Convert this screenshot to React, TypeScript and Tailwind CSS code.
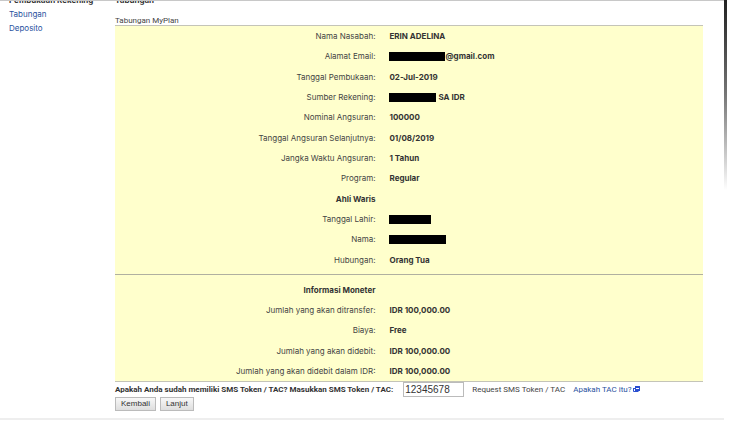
import { useState } from "react";

type Row = {
  label: string;
  value?: string;
  redacted?: string;
  heading?: boolean;
};

const ACCOUNT_ROWS: Row[] = [
  { label: "Nama Nasabah:", value: "ERIN ADELINA" },
  { label: "Alamat Email:", value: "@gmail.com", redacted: "w-[56px]" },
  { label: "Tanggal Pembukaan:", value: "02-Jul-2019" },
  { label: "Sumber Rekening:", value: "SA IDR", redacted: "w-[47px] mr-[2px]" },
  { label: "Nominal Angsuran:", value: "100000" },
  { label: "Tanggal Angsuran Selanjutnya:", value: "01/08/2019" },
  { label: "Jangka Waktu Angsuran:", value: "1 Tahun" },
  { label: "Program:", value: "Regular" },
  { label: "Ahli Waris", heading: true },
  { label: "Tanggal Lahir:", redacted: "w-[42px]" },
  { label: "Nama:", redacted: "w-[57px]" },
  { label: "Hubungan:", value: "Orang Tua" },
];

const MONEY_ROWS: Row[] = [
  { label: "Informasi Moneter", heading: true },
  { label: "Jumlah yang akan ditransfer:", value: "IDR 100,000.00" },
  { label: "Biaya:", value: "Free" },
  { label: "Jumlah yang akan didebit:", value: "IDR 100,000.00" },
  { label: "Jumlah yang akan didebit dalam IDR:", value: "IDR 100,000.00" },
];

const DetailTable = ({ rows, className }: { rows: Row[]; className: string }) => (
  <table className={`w-full table-fixed font-[Inter,Arial,sans-serif] ${className}`}>
    <tbody>
      {rows.map((row) => (
        <tr key={row.label}>
          <th
            scope="row"
            className={`w-[44.3%] p-0 text-right align-middle ${row.heading ? "font-bold text-[#333]" : "font-normal text-[#444]"}`}
          >
            {row.label}
          </th>
          <td className="py-0 pr-0 pl-[14px] align-middle font-bold text-[#333]">
            <div className="flex items-center">
              {row.redacted && <span className={`h-[9px] bg-black ${row.redacted}`} />}
              {row.value}
            </div>
          </td>
        </tr>
      ))}
    </tbody>
  </table>
);

const PopupIcon = () => (
  <svg className="ml-0.5 h-[7px] w-[7px]" viewBox="0 0 7 7" aria-hidden="true">
    <rect x="2" y="0" width="5" height="5" fill="#2a4fd0" />
    <rect x="3" y="2" width="3" height="1" fill="#fff" />
    <path d="M0.5 2.5V5.5H5.5" fill="none" stroke="#2a4fd0" />
    <path d="M0 2.5H2" stroke="#2a4fd0" />
  </svg>
);

const buttonClasses =
  "h-[14px] border border-[#bbb] bg-linear-to-b from-[#f8f8f8] to-[#dedede] px-[5px] font-['Liberation_Sans',Arial,sans-serif] leading-[12px] text-[#333]";

const App = () => {
  const [token, setToken] = useState("12345678");

  return (
    <div className="flex items-start bg-white pr-1 font-[Roboto,Arial,sans-serif] text-[8px] leading-[14px] text-[#444]">
      <div className="min-w-0 flex-1 overflow-hidden border-t border-b-2 border-t-[#c8c8c8] border-b-[#eee] pb-[7px]">
        <div className="-mt-2 flex">
          <nav className="w-[115px] shrink-0 pl-[9px] font-[Inter,Arial,sans-serif]">
            <h2 className="font-bold text-[#333]">Pembukaan Rekening</h2>
            <ul>
              <li>
                <a href="#tabungan" className="text-[#2a52a0]">Tabungan</a>
              </li>
              <li>
                <a href="#deposito" className="text-[#2a52a0]">Deposito</a>
              </li>
            </ul>
          </nav>

          <main className="min-w-0 flex-1 pr-[21px]">
            <h1 className="font-[Inter,Arial,sans-serif] font-bold text-[#333]">Tabungan</h1>
            <p className="mt-2.5 leading-[8px]">Tabungan MyPlan</p>

            <section className="border-y border-[#c4c4b8] bg-[#ffffcc]">
              <DetailTable rows={ACCOUNT_ROWS} className="h-[244px]" />
              <hr className="mt-1 mb-[5px] border-[#b0b0a0]" />
              <DetailTable rows={MONEY_ROWS} className="h-[101px]" />
            </section>

            <form onSubmit={(e) => e.preventDefault()}>
              <div className="flex items-center whitespace-nowrap">
                <label htmlFor="token" className="font-bold text-[#333]">
                  Apakah Anda sudah memiliki SMS Token / TAC? Masukkan SMS Token / TAC:
                </label>
                <input
                  id="token"
                  value={token}
                  onChange={(e) => setToken(e.target.value)}
                  className="ml-2.5 h-[15px] w-[61px] border border-[#bbb] bg-white px-px font-['Liberation_Sans',Arial,sans-serif] text-[10px] text-[#333]"
                />
                <span className="ml-2">Request SMS Token / TAC</span>
                <a href="#tac" className="ml-2 flex items-center text-[#2a52a0]">
                  Apakah TAC itu?
                  <PopupIcon />
                </a>
              </div>
              <div className="flex gap-1">
                <button type="button" className={buttonClasses}>Kembali</button>
                <button type="submit" className={buttonClasses}>Lanjut</button>
              </div>
            </form>
          </main>
        </div>
      </div>
      <div className="h-[190px] w-[3px] bg-linear-to-b from-[#222] via-[#777] to-white" />
    </div>
  );
};

export default App;
